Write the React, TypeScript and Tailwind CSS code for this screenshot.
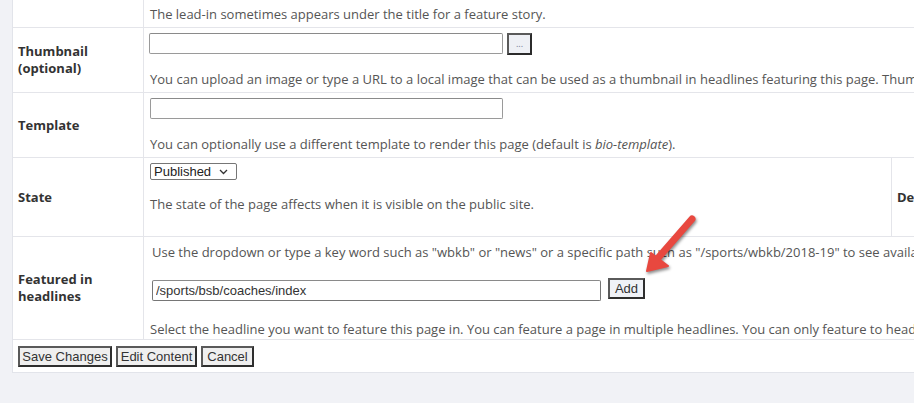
import React from "react";

const desc = "font-['Open_Sans',sans-serif] text-[13px] leading-[18px] text-[#555]";
const label = "font-['Open_Sans',sans-serif] text-[13px] leading-[17px] font-bold text-[#333]";
const arial = "font-['Liberation_Sans',Arial,sans-serif] text-[13px]";
const btn =
  "h-[21px] bg-[#efefef] border-2 border-t-[#5a5a5a] border-l-[#5a5a5a] border-r-[#2e2e2e] border-b-[#2e2e2e] text-[#333] flex items-center justify-center leading-none " +
  arial;
const inputCls = "h-[21px] bg-white border border-[#9a9a9a] border-t-[#8a8a8a] rounded-[2px] px-[3px] text-[#333] " + arial;

function Label({ children }: { children?: React.ReactNode }) {
  return (
    <div className="w-[131px] shrink-0 border-r border-[#e4e5ea] pl-[5px] flex items-center">
      <div className={label}>{children}</div>
    </div>
  );
}

export default function App() {
  return (
    <div className="relative w-[914px] h-[403px] overflow-hidden bg-[#f1f2f6] pl-[12px]">
      <div className="w-[1150px] bg-white border-l border-b border-[#e2e4ea] whitespace-nowrap">
        {/* Row 1 */}
        <div className="flex h-[28px] border-b border-[#e4e5ea]">
          <Label />
          <div className="pl-[6px] pt-[5px]">
            <div className={desc}>The lead-in sometimes appears under the title for a feature story.</div>
          </div>
        </div>
        {/* Thumbnail */}
        <div className="flex h-[65px] border-b border-[#e4e5ea]">
          <Label>
            Thumbnail
            <br />
            (optional)
          </Label>
          <div className="pl-[5px] pt-[5px]">
            <div className="flex items-start gap-[4px]">
              <input readOnly className={inputCls + " w-[354px]"} />
              <div className="w-[25px] h-[22px] bg-[#eef0f5] border-2 border-t-[#5a5a5a] border-l-[#5a5a5a] border-r-[#2b2b2b] border-b-[#2b2b2b] flex items-center justify-center text-[9px] text-[#7a7f9a] leading-none pb-[1px]">
                ...
              </div>
            </div>
            <div className={desc + " mt-[15px] pl-[1px]"}>
              You can upload an image or type a URL to a local image that can be used as a thumbnail in headlines featuring this page. Thumbnails
              should be square.
            </div>
          </div>
        </div>
        {/* Template */}
        <div className="flex h-[65px] border-b border-[#e4e5ea]">
          <Label>Template</Label>
          <div className="pl-[6px] pt-[5px]">
            <input readOnly className={inputCls + " w-[353px] block"} />
            <div className={desc + " mt-[16px]"}>
              You can optionally use a different template to render this page (default is <i>bio-template</i>).
            </div>
          </div>
        </div>
        {/* State */}
        <div className="flex h-[79px] border-b border-[#e4e5ea]">
          <Label>State</Label>
          <div className="w-[748px] shrink-0 pl-[6px] pt-[5px] border-r border-[#e4e5ea]">
            <div className={"w-[87px] h-[17px] border border-[#767676] rounded-[2px] flex items-center justify-between pl-[3px] pr-[8px] text-[#222] " + arial}>
              <span className="leading-none">Published</span>
              <svg width="9" height="6" viewBox="0 0 9 6">
                <path d="M1 1l3.5 3.5L8 1" fill="none" stroke="#333" strokeWidth="1.3" />
              </svg>
            </div>
            <div className={desc + " mt-[15px]"}>The state of the page affects when it is visible on the public site.</div>
          </div>
          <div className="pl-[5px] flex items-center">
            <div className={label}>Default Headline</div>
          </div>
        </div>
        {/* Featured */}
        <div className="flex h-[103px] border-b border-[#e4e5ea]">
          <Label>
            Featured in
            <br />
            headlines
          </Label>
          <div className="pl-[8px] pt-[6px]">
            <div className={desc}>
              Use the dropdown or type a key word such as "wbkb" or "news" or a specific path such as "/sports/wbkb/2018-19" to see available
              headlines.
            </div>
            <div className="flex items-end gap-[7px] mt-[17px]">
              <input readOnly value="/sports/bsb/coaches/index" className={inputCls + " w-[449px] border-[#767676]"} />
              <div className={btn + " w-[37px] mb-[2px] bg-[#f0f2f7]"}>Add</div>
            </div>
            <div className={desc + " mt-[19px] -ml-[2px]"}>
              Select the headline you want to feature this page in. You can feature a page in multiple headlines. You can only feature to headlines
              you have access to.
            </div>
          </div>
        </div>
        {/* Buttons */}
        <div className="flex gap-[4px] h-[32px] pt-[6px] pl-[5px]">
          <div className={btn + " w-[94px]"}>Save Changes</div>
          <div className={btn + " w-[81px]"}>Edit Content</div>
          <div className={btn + " w-[53px]"}>Cancel</div>
        </div>
      </div>
      {/* Annotation arrow */}
      <svg
        className="absolute left-0 top-0 pointer-events-none drop-shadow-[1px_2px_1.5px_rgba(0,0,0,0.45)]"
        width="914"
        height="403"
        viewBox="0 0 914 403"
      >
        <line x1="692" y1="219" x2="658" y2="258" stroke="#e8483f" strokeWidth="7" strokeLinecap="round" />
        <polygon points="647,271 651,253 668,266" fill="#e8483f" stroke="#e8483f" strokeWidth="2" strokeLinejoin="round" />
      </svg>
    </div>
  );
}
